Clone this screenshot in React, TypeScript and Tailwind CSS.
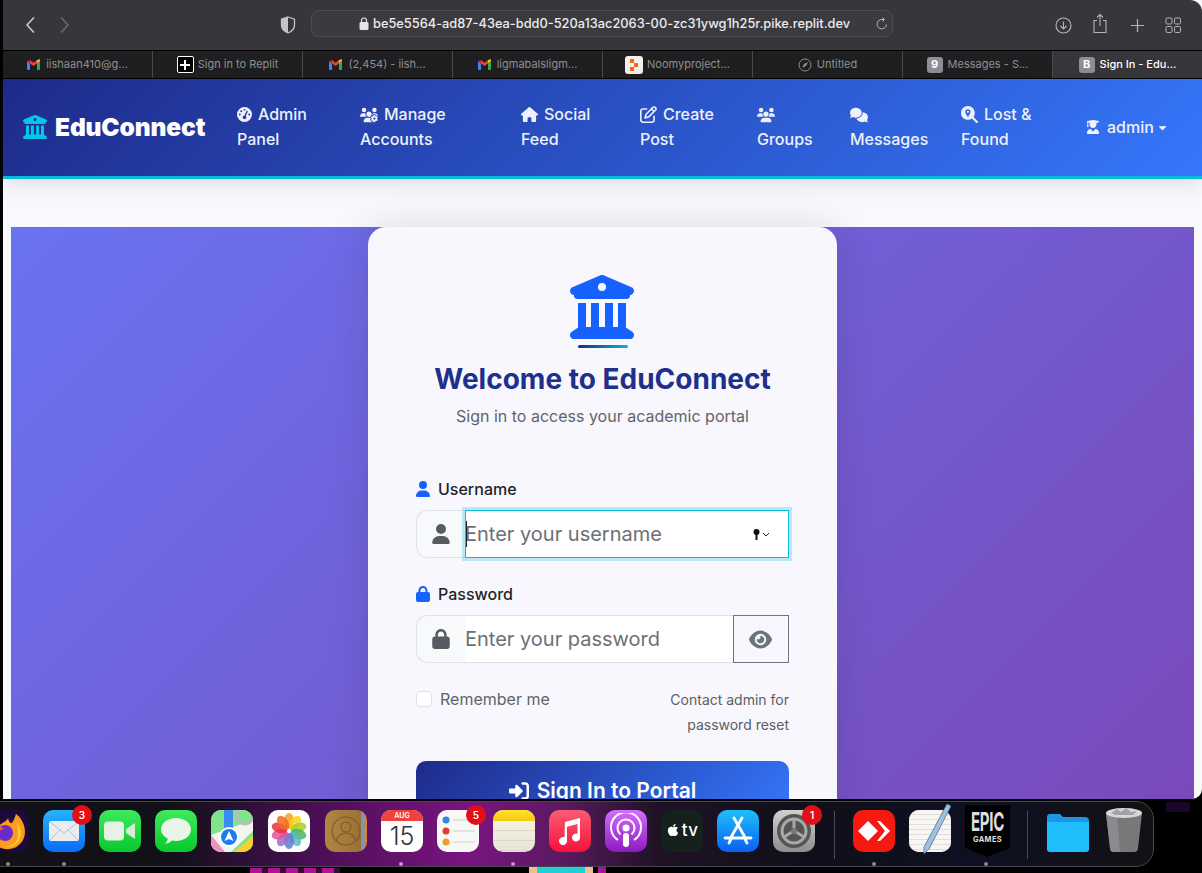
import React from "react";
import { FaBuildingColumns, FaGaugeHigh, FaUsersGear, FaHouse, FaRegPenToSquare, FaUsers, FaComments, FaMagnifyingGlassLocation, FaUserGraduate, FaUser, FaLock, FaEye, FaRightToBracket, FaCaretDown, FaApple } from "react-icons/fa6";

const Gmail = () => (
  <svg width="13" height="11" viewBox="0 0 13 11" className="shrink-0 mr-[6px]">
    <path d="M0 2v8a1 1 0 0 0 1 1h2V4.500z" fill="#4285f4" />
    <path d="M13 2v8a1 1 0 0 1-1 1h-2V4.500z" fill="#34a853" />
    <path d="M0 2l3 2.500V1z" fill="#c5221f" />
    <path d="M3 1v3.500L6.500 7 10 4.500V1L6.500 3.800z" fill="#ea4335" />
    <path d="M10 1v3.500L13 2a1 1 0 0 0-1.500-1.500z" fill="#fbbc04" />
  </svg>
);

function Tab({ icon, label, active }: { icon: React.ReactNode; label: string; active?: boolean }) {
  return (
    <div className={"flex-1 h-full flex items-center justify-center text-[11px] border-r border-[#4a4a4c] last:border-r-0 " + (active ? "bg-[#37373b] text-white font-medium" : "text-[#8f8f92]")}>
      {icon}
      <span>{label}</span>
    </div>
  );
}

function SquareBadge({ ch }: { ch: string }) {
  return <span className="w-[16px] h-[16px] mr-[5px] rounded-[3px] bg-[#8e8e96] text-white text-[11px] font-bold flex items-center justify-center">{ch}</span>;
}

function BrowserChrome() {
  return (
    <div className="bg-[#37373b] rounded-tr-[12px]">
      <div className="h-[50px] flex items-center relative">
        <svg width="12" height="18" viewBox="0 0 12 18" className="ml-[21px]"><path d="M9.500 2L3 9l6.500 7" fill="none" stroke="#c8c8ca" strokeWidth="1.700" strokeLinecap="round" strokeLinejoin="round" /></svg>
        <svg width="12" height="18" viewBox="0 0 12 18" className="ml-[23px]"><path d="M2.500 2L9 9l-6.500 7" fill="none" stroke="#69696d" strokeWidth="1.700" strokeLinecap="round" strokeLinejoin="round" /></svg>
        <svg width="16" height="18" viewBox="0 0 16 18" className="ml-[209px]">
          <path d="M8 1l6.500 2.200v5.600c0 4-3 6.800-6.500 8.200C4.500 15.600 1.500 12.800 1.500 8.800V3.200z" fill="none" stroke="#c4c4c6" strokeWidth="1.300" />
          <path d="M8 1L1.500 3.200v5.600C1.500 12.800 4.500 15.600 8 17z" fill="#c4c4c6" />
        </svg>
        <div className="ml-[15px] w-[582px] h-[27px] mt-[-3px] rounded-[8px] border border-[#4c4c51] bg-[#3a3a3f] flex items-center relative">
          <svg width="10" height="13" viewBox="0 0 10 13" className="ml-[47px] mr-[4px]"><rect x="0.500" y="5" width="9" height="8" rx="1.500" fill="#e4e4e6" /><path d="M2.500 5.500V3.500a2.500 2.500 0 0 1 5 0v2" fill="none" stroke="#e4e4e6" strokeWidth="1.200" /></svg>
          <span className="text-[12.800px] font-medium text-[#ececee] whitespace-nowrap">be5e5564-ad87-43ea-bdd0-520a13ac2063-00-zc31ywg1h25r.pike.replit.dev</span>
          <svg width="14" height="14" viewBox="0 0 14 14" className="absolute right-[3.500px] top-[6px]"><path d="M11.500 7.500A4.700 4.700 0 1 1 7 2.500h2" fill="none" stroke="#b8b8ba" strokeWidth="1" /><path d="M7.500 0.500L9.500 2.500 7.500 4.500" fill="none" stroke="#b8b8ba" strokeWidth="1" /></svg>
        </div>
        <svg width="17" height="17" viewBox="0 0 17 17" className="ml-[162px]"><circle cx="8.500" cy="8.500" r="7.500" fill="none" stroke="#b5b5b7" strokeWidth="1.100" /><path d="M8.500 4.500v7.500M5.500 9l3 3 3-3" fill="none" stroke="#b5b5b7" strokeWidth="1.100" /></svg>
        <svg width="16" height="21" viewBox="0 0 16 21" className="ml-[20px] mt-[-3px]"><path d="M5 7.500H2v12h12v-12h-3" fill="none" stroke="#b5b5b7" strokeWidth="1.100" /><path d="M8 13V1.500M5 4.500l3-3 3 3" fill="none" stroke="#b5b5b7" strokeWidth="1.100" /></svg>
        <svg width="15" height="15" viewBox="0 0 15 15" className="ml-[22px]"><path d="M7.500 1v13M1 7.500h13" stroke="#b5b5b7" strokeWidth="1.200" /></svg>
        <svg width="16" height="16" viewBox="0 0 16 16" className="ml-[20px]"><g fill="none" stroke="#b5b5b7" strokeWidth="1"><rect x="1" y="1" width="6" height="6" rx="1.200" /><rect x="9.500" y="1" width="6" height="6" rx="1.200" /><rect x="1" y="9.500" width="6" height="6" rx="1.200" /><rect x="9.500" y="9.500" width="6" height="6" rx="1.200" /></g></svg>
      </div>
      <div className="h-[29px] flex items-stretch bg-[#1f1f21] border-t border-t-black border-b border-b-black">
        <Tab icon={<Gmail />} label="iishaan410@g..." />
        <Tab icon={<span className="w-[17px] h-[17px] mr-[4px] border border-white rounded-[2px] bg-black text-white flex items-center justify-center"><svg width="10" height="10" viewBox="0 0 10 10"><path d="M5 0v10M0 5h10" stroke="#fff" strokeWidth="2" /></svg></span>} label="Sign in to Replit" />
        <Tab icon={<Gmail />} label="(2,454) - iish..." />
        <Tab icon={<Gmail />} label="ligmabalsligm..." />
        <Tab icon={<span className="w-[18px] h-[18px] mr-[4px] rounded-[3px] bg-[#f4f0ec] flex items-center justify-center"><svg width="10" height="12" viewBox="0 0 10 12"><path d="M1 0h4v4H1zM5 4h4v4H5zM1 8h4v4H1z" fill="#f26522" /></svg></span>} label="Noomyproject..." />
        <Tab icon={<svg width="14" height="14" viewBox="0 0 14 14" className="mr-[5px]"><circle cx="7" cy="7" r="6" fill="none" stroke="#8f8f92" strokeWidth="1" /><path d="M10 4L8 8 4 10l2-4z" fill="#8f8f92" /></svg>} label="Untitled" />
        <Tab icon={<SquareBadge ch="9" />} label="Messages - S..." />
        <Tab active icon={<SquareBadge ch="B" />} label="Sign In - Edu..." />
      </div>
    </div>
  );
}

function NavItem({ w, icon, first, second }: { w: string; icon: React.ReactNode; first?: string; second: string }) {
  return (
    <div className={w + " shrink-0 text-[16px] font-medium leading-[25px] text-[#eef1fb]"}>
      <div className="flex items-center gap-[6px] h-[25px]">{icon}{first && <span>{first}</span>}</div>
      <div>{second}</div>
    </div>
  );
}

function Navbar() {
  return (
    <div className="relative z-10 h-[100px] flex items-center bg-[linear-gradient(135deg,#1e2a8a_0%,#3577fc_100%)] border-b-[3px] border-[#06bcd8] shadow-[0_4px_20px_rgba(0,0,0,0.12)] pb-[1px]">
      <FaBuildingColumns className="ml-[20px] text-[#06c6e6]" size={24} />
      <span className="ml-[8px] w-[182px] text-[24.500px] font-black text-white tracking-[-0.005em]">EduConnect</span>
      <NavItem w="w-[123px]" icon={<FaGaugeHigh size={15} />} first="Admin" second="Panel" />
      <NavItem w="w-[161px]" icon={<FaUsersGear size={18} />} first="Manage" second="Accounts" />
      <NavItem w="w-[119px]" icon={<FaHouse size={17} />} first="Social" second="Feed" />
      <NavItem w="w-[117px]" icon={<FaRegPenToSquare size={17} />} first="Create" second="Post" />
      <NavItem w="w-[93px]" icon={<FaUsers size={18} />} second="Groups" />
      <NavItem w="w-[111px]" icon={<FaComments size={18} />} second="Messages" />
      <NavItem w="w-[125px]" icon={<FaMagnifyingGlassLocation size={17} />} first="Lost &" second="Found" />
      <div className="flex items-center text-[16px] font-medium text-[#eef1fb]">
        <FaUserGraduate size={14} className="mr-[7px]" />admin<FaCaretDown size={11} className="ml-[3px]" />
      </div>
    </div>
  );
}

function LoginCard() {
  return (
    <div className="w-[469px] h-[640px] bg-[#f8f7fe] rounded-t-[18px] shadow-[0_0_40px_rgba(0,0,0,0.12)] px-[48px] pt-[48px] flex flex-col">
      <FaBuildingColumns className="self-center text-[#1762ff] -ml-px" size={64} />
      <div className="self-center mt-[6px] w-[50px] h-[3px] rounded-full bg-[linear-gradient(90deg,#1e2a8a,#06b6d4)]" />
      <h1 className="mt-[13px] text-center text-[28px] leading-[36px] font-bold text-[#1e2f8c] whitespace-nowrap">Welcome to EduConnect</h1>
      <p className="mt-[7px] text-center text-[16px] leading-[24px] text-[#5f6469]">Sign in to access your academic portal</p>

      <label className="mt-[49px] flex items-center h-[24px] text-[16px] font-medium text-[#212529]">
        <FaUser className="text-[#1762ff] -ml-px mr-[7px]" size={16} />Username
      </label>
      <div className="mt-[9px] flex h-[48px]">
        <div className="w-[49px] bg-[#f8f9fa] border border-[#dee2e6] border-r-0 rounded-l-[12px] flex items-center justify-center">
          <FaUser className="text-[#565c61]" size={20} />
        </div>
        <div className="relative flex-1 bg-white border border-[#06bcd8] shadow-[0_0_0_3px_rgba(6,182,212,0.25)] flex items-center text-[20px] text-[#6c7075]">
          <span className="absolute left-0 top-[10px] w-px h-[26px] bg-[#222]" />
          <span className="-ml-px">Enter your username</span>
          <svg width="20" height="14" viewBox="0 0 20 14" className="absolute right-[15px] top-[17px]"><circle cx="3.500" cy="4" r="3" fill="#111" /><rect x="2.500" y="5" width="2" height="7" fill="#111" /><path d="M10 5l3 3 3-3" fill="none" stroke="#222" strokeWidth="1" /></svg>
        </div>
      </div>

      <label className="mt-[24px] flex items-center h-[24px] text-[16px] font-medium text-[#212529]">
        <FaLock className="text-[#1762ff] -ml-px mr-[7px]" size={16} />Password
      </label>
      <div className="mt-[9px] flex h-[48px]">
        <div className="w-[49px] bg-[#f8f9fa] border border-[#dee2e6] border-r-0 rounded-l-[12px] flex items-center justify-center">
          <FaLock className="text-[#565c61]" size={20} />
        </div>
        <div className="flex-1 bg-white border-y border-[#dee2e6] flex items-center text-[20px] text-[#6c7075]">
          <span>Enter your password</span>
        </div>
        <div className="w-[56px] border border-[#6c757d] flex items-center justify-center">
          <FaEye className="text-[#6c757d] -ml-px" size={23} />
        </div>
      </div>

      <div className="mt-[24px] flex justify-between">
        <div className="flex items-center h-[23px] text-[16px] text-[#5f6469]">
          <span className="w-[16px] h-[16px] mr-[8px] bg-white border border-[#dee2e6] rounded-[4px]" />Remember me
        </div>
        <div className="w-[150px] text-right text-[14px] leading-[25px] text-[#5a5f64]">Contact admin for password reset</div>
      </div>

      <div className="mt-[24px] h-[60px] rounded-[10px] flex items-center justify-center gap-[8px] bg-[linear-gradient(135deg,#1e2a8a,#3577fc)] text-white text-[21px] font-semibold">
        <FaRightToBracket size={20} />Sign In to Portal
      </div>
    </div>
  );
}

const Squircle = ({ className, children }: { className: string; children?: React.ReactNode }) => (
  <div className={"w-[42px] h-[42px] rounded-[10px] shrink-0 relative overflow-hidden flex items-center justify-center " + className}>{children}</div>
);

function Badge({ n, className }: { n: string; className: string }) {
  return <span className={"absolute z-10 w-[20px] h-[20px] rounded-full bg-[#e30e16] text-white text-[10px] font-semibold flex items-center justify-center " + className}>{n}</span>;
}

const Dot = ({ c = "#8a8a8a" }: { c?: string }) => <span className="absolute left-[19px] top-[52px] w-[4px] h-[4px] rounded-full" style={{ background: c }} />;

function Slot({ children, w = "w-[42px]" }: { children: React.ReactNode; w?: string }) {
  return <div className={"relative shrink-0 h-[42px] " + w}>{children}</div>;
}

function PhotosIcon() {
  const colors = ["#f9a11b", "#f7d51d", "#a7d129", "#4ab866", "#5cb8c4", "#5a7fd6", "#9a6bc6", "#e0559a", "#e8303a", "#f26b21"];
  return (
    <svg width="36" height="36" viewBox="-18 -18 36 36">
      {colors.map((c, i) => (
        <ellipse key={c} cx="0" cy="-10" rx="5" ry="8" fill={c} opacity="0.85" transform={`rotate(${i * 36})`} />
      ))}
    </svg>
  );
}

function Dock() {
  return (
    <div className="absolute left-0 top-[799px] w-[1202px] h-[74px] overflow-hidden">
      <div className="absolute left-[250px] w-[90px] top-[69px] h-[5px] bg-[repeating-linear-gradient(90deg,#b0109a_0,#b0109a_12px,#3a0a3a_12px,#3a0a3a_18px)]" />
      <div className="absolute left-[529px] w-[64px] top-[68px] h-[6px] bg-[#f0c090]" />
      <div className="absolute left-[537px] w-[48px] top-[68px] h-[6px] bg-[#20d0d8]" />
      <div className="absolute left-[598px] w-[8px] top-[68px] h-[6px] bg-[#b010a0]" />
      <div className="absolute left-[1166px] w-[24px] top-[3px] h-[10px] bg-[#1c0628]" />
      <div className="absolute left-[-31px] top-[2px] w-[1185px] h-[66px] rounded-[18px] border border-[#4a4550] bg-[linear-gradient(90deg,#111116_0%,#121018_17%,#4d0f58_30%,#7a1480_42%,#5a1a60_50%,#201226_58%,#10101a_70%,#0e1022_85%,#121214_100%)] flex items-start pt-[8px] pl-[17px]">
        <div className="flex items-start gap-[14px]">
          <Slot>
            <Squircle className="bg-[#1c0a3c]">
              <svg width="42" height="42" viewBox="0 0 42 42">
                <path d="M29 4c9 7 11 18 7 26-4 7-11 10-18 9C10 38 4 31 4 23c0-4 1-7 3-9 0 3 2 4 3 5 2-6 9-6 11-11 1 4 2 5 4 5 2-3 3-6 4-9z" fill="#ff9a1f" />
                <path d="M30 12c5 7 5 15 1 20-3 4-9 6-14 4 8 1 14-4 14-11 0-5-1-9-1-13z" fill="#ffd02f" />
                <circle cx="18" cy="23" r="8" fill="#6a2cc9" />
                <path d="M4 18c5-3 9-2 13 1-4 1-7 3-9 6z" fill="#ff5a2a" />
              </svg>
            </Squircle>
            <Dot />
          </Slot>
          <Slot>
            <Squircle className="bg-[linear-gradient(180deg,#25b4fb,#0a6cf5)]">
              <svg width="30" height="20" viewBox="0 0 30 20"><rect width="30" height="20" rx="2" fill="#e9edf2" /><path d="M1 1l14 11L29 1M1 19l10-10M29 19L19 9" fill="none" stroke="#a9b2bc" strokeWidth="0.800" /></svg>
            </Squircle>
            <Badge n="3" className="left-[29px] top-[-5px]" />
            <Dot />
          </Slot>
          <Slot>
            <Squircle className="bg-[linear-gradient(180deg,#3fe95f,#09c82c)]">
              <svg width="32" height="20" viewBox="0 0 32 20"><rect width="20" height="19" y="0.500" rx="4" fill="#e6f2e6" /><path d="M22 8l9-6v16l-9-6z" fill="#d5ecd5" /></svg>
            </Squircle>
          </Slot>
          <Slot>
            <Squircle className="bg-[linear-gradient(180deg,#3fe95f,#09c82c)]">
              <svg width="32" height="28" viewBox="0 0 32 28"><path d="M16 1c8.300 0 15 5 15 11.500S24.300 24 16 24c-1.500 0-3-.2-4.300-.5C10 25.500 7 27 5 26.500c1.500-1 2.500-3 2.700-5C3.700 19.300 1 16.200 1 12.500 1 6 7.700 1 16 1z" fill="#eaf5ea" /></svg>
            </Squircle>
          </Slot>
          <Slot>
            <Squircle className="bg-[#8fe59b]">
              <svg width="42" height="42" viewBox="0 0 42 42">
                <rect width="42" height="42" fill="#7fe58a" />
                <path d="M0 25L42 10v11L20 42H0z" fill="#f4f4f0" />
                <path d="M0 25l14 17H0z" fill="#ef8fc0" />
                <path d="M23 42l19-16v16z" fill="#f8d02f" />
                <rect x="13" y="0" width="9" height="24" fill="#3b8cf0" />
                <circle cx="34" cy="6" r="8" fill="none" stroke="#b9bdb9" strokeWidth="3" />
                <circle cx="18" cy="27" r="10" fill="#fff" />
                <circle cx="18" cy="27" r="8" fill="#1a7cf0" />
                <path d="M18 21l4.500 10-4.500-2-4.500 2z" fill="#fff" />
              </svg>
            </Squircle>
          </Slot>
          <Slot w="w-[43px]"><Squircle className="bg-white ml-px"><PhotosIcon /></Squircle></Slot>
          <Slot>
            <Squircle className="bg-[linear-gradient(90deg,#b08642,#9a7236_85%,#5aa0e0_86%,#e08030)] ml-px">
              <svg width="34" height="34" viewBox="0 0 34 34"><g fill="none" stroke="#7d5a26" strokeWidth="1.100"><circle cx="17" cy="17" r="14" /><circle cx="17" cy="13" r="5" /><path d="M7 27c2-6 6-8 10-8s8 2 10 8" /></g></svg>
            </Squircle>
          </Slot>
          <Slot>
            <div className="w-[42px] h-[42px] rounded-[10px] overflow-hidden bg-white flex flex-col items-center ml-px">
              <div className="w-full h-[11px] bg-[#f0423c] text-white text-[7px] font-semibold leading-[11px] text-center">AUG</div>
              <div className="text-[25px] font-light leading-[30px] text-[#333]">15</div>
            </div>
            <Dot c="#e080e0" />
          </Slot>
          <Slot>
            <Squircle className="bg-[#f8f8f6] ml-px">
              <svg width="34" height="34" viewBox="0 0 34 34"><circle cx="5" cy="6" r="3.500" fill="#2f86ea" /><circle cx="5" cy="17" r="3.500" fill="#e23c35" /><circle cx="5" cy="28" r="3.500" fill="#f09b2d" /><path d="M12 6h22M12 17h22M12 28h22" stroke="#cfcfcf" strokeWidth="1" /></svg>
            </Squircle>
            <Badge n="5" className="left-[30px] top-[-5px]" />
          </Slot>
          <Slot>
            <div className="w-[42px] h-[42px] rounded-[10px] overflow-hidden bg-[linear-gradient(180deg,#f7f5ec,#e9e4d2)] ml-px">
              <div className="h-[11px] bg-[linear-gradient(180deg,#ffdf2f,#f9c80c)]" />
              <div className="mt-[9px] h-px bg-[#dbd7c9]" />
              <div className="mt-[9px] h-px bg-[#dbd7c9]" />
              <div className="mt-[9px] h-px bg-[#dbd7c9]" />
            </div>
            <Dot c="#e080e0" />
          </Slot>
          <Slot>
            <Squircle className="bg-[linear-gradient(180deg,#fb5c74,#f5123a)] ml-px">
              <svg width="26" height="28" viewBox="0 0 26 28"><path d="M9 5l15-4v19.500a4 4 0 1 1-2.500-3.700V7L11 9.700V24a4 4 0 1 1-2.500-3.700z" fill="#fff" transform="translate(-1 0)" /></svg>
            </Squircle>
          </Slot>
          <Slot>
            <Squircle className="bg-[linear-gradient(180deg,#d56efc,#8a1bc0)] ml-px">
              <svg width="34" height="36" viewBox="0 0 34 36"><g fill="none" stroke="#fff" strokeWidth="2"><path d="M9 27A15 15 0 1 1 25 27" /><path d="M11.500 21.500A8.500 8.500 0 1 1 22.500 21.500" /></g><circle cx="17" cy="15" r="3.500" fill="#fff" /><rect x="14" y="20" width="6" height="14" rx="3" fill="#fff" /></svg>
            </Squircle>
          </Slot>
          <Slot>
            <Squircle className="bg-[#15211c] ml-px">
              <FaApple size={14} className="text-white mr-[2px] mb-[2px]" />
              <span className="text-white text-[17px] font-medium tracking-[0.02em]">tv</span>
            </Squircle>
          </Slot>
          <Slot>
            <Squircle className="bg-[linear-gradient(180deg,#1ec0fb,#0a5ff0)] ml-px">
              <svg width="32" height="32" viewBox="0 0 32 32"><path d="M20 3L8 24M12 3l12 21M3 23h26M7 28l2-4M25 28l-2-4" fill="none" stroke="#fff" strokeWidth="2.800" strokeLinecap="round" /></svg>
            </Squircle>
          </Slot>
          <Slot>
            <Squircle className="bg-[linear-gradient(180deg,#d0d0d0,#8e8e8e)] ml-px">
              <svg width="36" height="36" viewBox="0 0 36 36"><circle cx="18" cy="18" r="17" fill="#555" /><circle cx="18" cy="18" r="12" fill="none" stroke="#a8a8a8" strokeWidth="3" /><path d="M18 6v9M8 24l8-5M28 24l-8-5" stroke="#a8a8a8" strokeWidth="3" /><circle cx="18" cy="18" r="3" fill="#777" /></svg>
            </Squircle>
            <Badge n="1" className="left-[30px] top-[-5px]" />
          </Slot>
        </div>
        <div className="ml-[20px] mt-[1px] w-px h-[48px] bg-[#4a4a50]" />
        <div className="ml-[18px] flex items-start gap-[14px]">
          <Slot>
            <Squircle className="bg-[#f5190f]">
              <svg width="32" height="22" viewBox="0 0 32 22"><path d="M10 1l10 10-10 10L0 11z" fill="#fff" /><path d="M19 1l3-0 10 10-10 10h-3l8-10z" fill="#fff" /></svg>
            </Squircle>
            <Dot />
          </Slot>
          <Slot>
            <Squircle className="bg-[#f8f6f2] !overflow-visible">
              <div className="absolute inset-0 rounded-[10px] bg-[repeating-linear-gradient(180deg,#f8f6f2_0,#f8f6f2_4px,#e4dcdc_4px,#e4dcdc_5px)]" />
              <svg width="42" height="52" viewBox="0 0 42 52" className="absolute left-0 top-[-7px]"><path d="M38 1l4 2L20 46l-5 5 0-7z" fill="#9fc1e0" stroke="#56708a" strokeWidth="0.800" /></svg>
            </Squircle>
          </Slot>
          <Slot w="w-[45px]">
            <div className="absolute top-[-5px] w-[45px] h-[52px] bg-black [clip-path:polygon(0_0,100%_0,100%_82%,50%_100%,0_82%)] flex flex-col items-center text-[#dedede]">
              <span className="text-[26px] leading-[27px] font-bold mt-[3px] scale-x-[0.58] tracking-[-0.02em]">EPIC</span>
              <span className="text-[7.500px] leading-[10px] font-bold tracking-[0.04em]">GAMES</span>
            </div>
            <Dot />
          </Slot>
        </div>
        <div className="ml-[17px] mt-[1px] w-px h-[48px] bg-[#4a4a50]" />
        <div className="ml-[18px] flex items-start gap-[15px]">
          <Slot w="w-[44px]">
            <svg width="44" height="42" viewBox="0 0 44 42"><path d="M1 7a3 3 0 0 1 3-3h10l3 3h22a4 4 0 0 1 4 4v4H1z" fill="#1c95ea" /><path d="M1 12h42v27a3 3 0 0 1-3 3H4a3 3 0 0 1-3-3z" fill="#20bdfd" /></svg>
          </Slot>
          <Slot w="w-[38px]">
            <svg width="38" height="46" viewBox="0 0 38 46" className="absolute top-[-3px]">
              <path d="M1 6h36l-4 35a4 4 0 0 1-4 4H9a4 4 0 0 1-4-4z" fill="#77787a" />
              <path d="M1 6l4 35a4 4 0 0 0 4 4h6L12 6z" fill="#8a8b8d" />
              <ellipse cx="19" cy="6" rx="18" ry="5" fill="#d8d8d8" />
              <path d="M6 6l6-4 4 3 5-4 5 4 6-1-4 4H10z" fill="#a8a0a8" />
            </svg>
          </Slot>
        </div>
      </div>
    </div>
  );
}

export default function App() {
  return (
    <div className="relative w-[1202px] h-[873px] overflow-hidden bg-black [font-family:Inter,'Liberation_Sans',sans-serif]">
      <div className="ml-[3px] h-[799px] overflow-hidden rounded-br-[10px] bg-[#f8f9fc] flex flex-col">
        <BrowserChrome />
        <Navbar />
        <div className="flex-1 pt-[48px] px-[8px] min-h-0">
          <div className="h-[640px] flex justify-center bg-[linear-gradient(135deg,#6a72f0_0%,#7a48b8_100%)]">
            <LoginCard />
          </div>
        </div>
      </div>
      <Dock />
    </div>
  );
}
